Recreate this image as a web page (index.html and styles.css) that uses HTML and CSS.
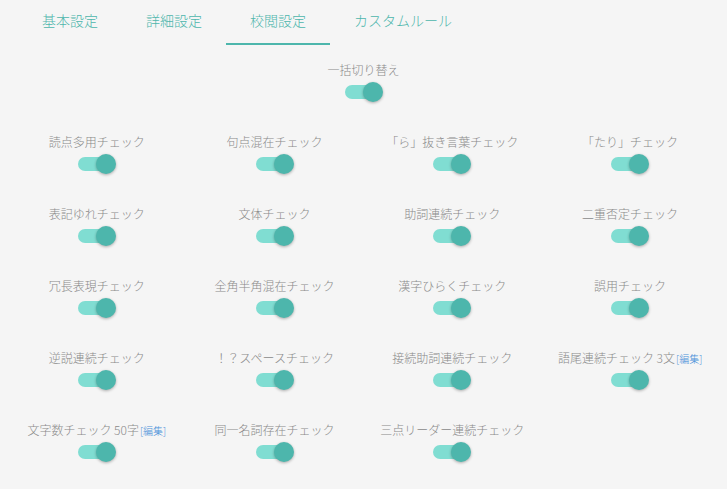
FILE: index.html
```html
<!DOCTYPE html>
<html lang="ja">
<head>
<meta charset="utf-8">
<link rel="stylesheet" href="styles.css">
</head>
<body>
<div class="page">
  <nav class="tabs">
    <div class="tab">基本設定</div>
    <div class="tab">詳細設定</div>
    <div class="tab active">校閲設定</div>
    <div class="tab">カスタムルール</div>
  </nav>
  <div class="master">
    <div class="item">
      <div class="label">一括切り替え</div>
      <div class="switch"><span class="track"></span><span class="thumb"></span></div>
    </div>
  </div>
  <div class="grid">
    <div class="item"><div class="label">読点多用チェック</div><div class="switch"><span class="track"></span><span class="thumb"></span></div></div>
    <div class="item"><div class="label">句点混在チェック</div><div class="switch"><span class="track"></span><span class="thumb"></span></div></div>
    <div class="item"><div class="label">「ら」抜き言葉チェック</div><div class="switch"><span class="track"></span><span class="thumb"></span></div></div>
    <div class="item"><div class="label">「たり」チェック</div><div class="switch"><span class="track"></span><span class="thumb"></span></div></div>

    <div class="item"><div class="label">表記ゆれチェック</div><div class="switch"><span class="track"></span><span class="thumb"></span></div></div>
    <div class="item"><div class="label">文体チェック</div><div class="switch"><span class="track"></span><span class="thumb"></span></div></div>
    <div class="item"><div class="label">助詞連続チェック</div><div class="switch"><span class="track"></span><span class="thumb"></span></div></div>
    <div class="item"><div class="label">二重否定チェック</div><div class="switch"><span class="track"></span><span class="thumb"></span></div></div>

    <div class="item"><div class="label">冗長表現チェック</div><div class="switch"><span class="track"></span><span class="thumb"></span></div></div>
    <div class="item"><div class="label">全角半角混在チェック</div><div class="switch"><span class="track"></span><span class="thumb"></span></div></div>
    <div class="item"><div class="label">漢字ひらくチェック</div><div class="switch"><span class="track"></span><span class="thumb"></span></div></div>
    <div class="item"><div class="label">誤用チェック</div><div class="switch"><span class="track"></span><span class="thumb"></span></div></div>

    <div class="item"><div class="label">逆説連続チェック</div><div class="switch"><span class="track"></span><span class="thumb"></span></div></div>
    <div class="item"><div class="label">！？スペースチェック</div><div class="switch"><span class="track"></span><span class="thumb"></span></div></div>
    <div class="item"><div class="label">接続助詞連続チェック</div><div class="switch"><span class="track"></span><span class="thumb"></span></div></div>
    <div class="item"><div class="label">語尾連続チェック 3文<span class="edit">[編集]</span></div><div class="switch"><span class="track"></span><span class="thumb"></span></div></div>

    <div class="item"><div class="label">文字数チェック 50字<span class="edit">[編集]</span></div><div class="switch"><span class="track"></span><span class="thumb"></span></div></div>
    <div class="item"><div class="label">同一名詞存在チェック</div><div class="switch"><span class="track"></span><span class="thumb"></span></div></div>
    <div class="item"><div class="label">三点リーダー連続チェック</div><div class="switch"><span class="track"></span><span class="thumb"></span></div></div>
  </div>
</div>
</body>
</html>
```
FILE: styles.css
```css
html, body {
  margin: 0;
  padding: 0;
  background: #f5f5f5;
}
body {
  font-family: "Noto Sans CJK JP", "Noto Sans", sans-serif;
  font-weight: 300;
}
.page {
  padding: 0 8px;
}
.tabs {
  display: flex;
  padding-left: 10px;
  height: 45px;
}
.tab {
  min-width: 56px;
  padding: 0 24px;
  font-size: 14px;
  line-height: 40px;
  color: #4db6ac;
  text-align: center;
  border-bottom: 2px solid transparent;
  box-sizing: border-box;
  height: 45px;
}
.tab.active {
  border-bottom-color: #4db6ac;
}
.master {
  display: flex;
  justify-content: center;
  padding-top: 16px;
}
.master .item {
  width: 120px;
}
.grid {
  display: grid;
  grid-template-columns: repeat(4, 1fr);
  row-gap: 24px;
  padding-top: 24px;
}
.item {
  display: flex;
  flex-direction: column;
  align-items: center;
}
.label {
  font-size: 12px;
  line-height: 18px;
  height: 18px;
  color: #8a8a8a;
  white-space: nowrap;
}
.edit {
  font-size: 10px;
  color: #4a90d9;
  margin-left: 1px;
}
.switch {
  position: relative;
  width: 38px;
  height: 30px;
}
.track {
  position: absolute;
  left: 0;
  top: 6px;
  width: 36px;
  height: 14px;
  border-radius: 7px;
  background: #80ddd2;
}
.thumb {
  position: absolute;
  left: 18px;
  top: 3px;
  width: 20px;
  height: 20px;
  border-radius: 50%;
  background: #4db6ac;
  box-shadow: 0 1px 3px rgba(0,0,0,0.3);
}
```
